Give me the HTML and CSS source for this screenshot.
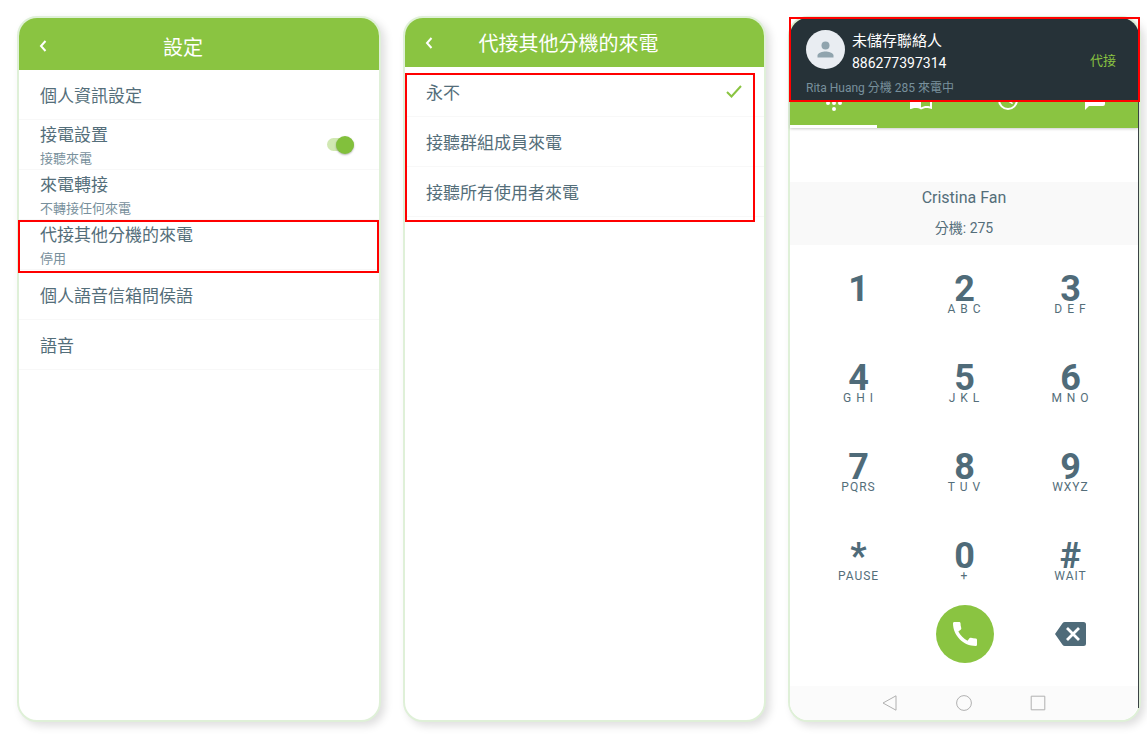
FILE: index.html
```html
<!DOCTYPE html>
<html lang="zh-Hant">
<head>
<meta charset="utf-8">
<meta name="viewport" content="width=device-width, initial-scale=1">
<title>設定</title>
<link rel="stylesheet" href="styles.css">
</head>
<body>
<main class="screens">

  <section class="phone">
    <header class="bar bar-tall">
      <button class="back" type="button" aria-label="返回"><svg width="8" height="12" viewBox="0 0 8 12"><path d="M6.500 1 2 6l4.500 5"/></svg></button>
      <h1 class="bar-title">設定</h1>
    </header>
    <ul class="list">
      <li class="row"><span class="row-title">個人資訊設定</span></li>
      <li class="row row-split">
        <label class="row-text" for="answer"><span class="row-title">接電設置</span><span class="row-sub">接聽來電</span></label>
        <input class="switch" id="answer" type="checkbox" role="switch" checked>
      </li>
      <li class="row"><span class="row-title">來電轉接</span><span class="row-sub">不轉接任何來電</span></li>
      <li class="row row-marked"><span class="row-title">代接其他分機的來電</span><span class="row-sub">停用</span></li>
      <li class="row"><span class="row-title">個人語音信箱問侯語</span></li>
      <li class="row"><span class="row-title">語音</span></li>
    </ul>
  </section>

  <section class="phone">
    <header class="bar">
      <button class="back" type="button" aria-label="返回"><svg width="8" height="12" viewBox="0 0 8 12"><path d="M6.500 1 2 6l4.500 5"/></svg></button>
      <h1 class="bar-title">代接其他分機的來電</h1>
    </header>
    <ul class="list list-marked">
      <li class="row row-split"><span class="row-title">永不</span><svg class="tick" width="16" height="13" viewBox="0 0 16 13"><path d="M1 7l4.500 4.500L15 1"/></svg></li>
      <li class="row"><span class="row-title">接聽群組成員來電</span></li>
      <li class="row"><span class="row-title">接聽所有使用者來電</span></li>
    </ul>
  </section>

  <section class="phone">
    <div class="dialer">
      <nav class="tabs">
        <button class="tab tab-active" type="button" aria-label="撥號"><svg width="24" height="24" viewBox="0 0 24 24"><path d="M12 19a2 2 0 1 0 0 4 2 2 0 0 0 0-4zM6 13a2 2 0 1 0 0 4 2 2 0 0 0 0-4zM18 13a2 2 0 1 0 0 4 2 2 0 0 0 0-4zM12 13a2 2 0 1 0 0 4 2 2 0 0 0 0-4zM6 7a2 2 0 1 0 0 4 2 2 0 0 0 0-4zM18 7a2 2 0 1 0 0 4 2 2 0 0 0 0-4z"/></svg></button>
        <button class="tab" type="button" aria-label="聯絡人"><svg width="24" height="24" viewBox="0 0 24 24"><path d="M21 5c-1.110-.35-2.330-.5-3.500-.5-1.950 0-4.050.4-5.500 1.500-1.450-1.100-3.550-1.500-5.500-1.500S2.450 4.900 1 6v14.650c0 .25.25.5.5.5.1 0 .15-.05.25-.05C3.100 20.450 5.050 20 6.500 20c1.950 0 4.050.4 5.500 1.500 1.350-.85 3.800-1.500 5.500-1.500 1.650 0 3.350.3 4.750 1.050.1.05.15.05.25.05.25 0 .5-.25.5-.5V6c-.6-.45-1.250-.75-2-1zm0 13.500c-1.100-.35-2.300-.5-3.500-.5-1.700 0-4.150.65-5.500 1.500V8c1.350-.85 3.800-1.500 5.500-1.500 1.200 0 2.400.15 3.500.5v11.500z"/></svg></button>
        <button class="tab" type="button" aria-label="通話紀錄"><svg width="24" height="24" viewBox="0 0 24 24"><path d="M12 2a10 10 0 1 0 0 20 10 10 0 0 0 0-20zm0 18a8 8 0 1 1 0-16 8 8 0 0 1 0 16zm.5-13H11v6l5.250 3.150.75-1.230-4.500-2.670z"/></svg></button>
        <button class="tab" type="button" aria-label="訊息"><svg width="24" height="24" viewBox="0 0 24 24"><path d="M20 2H4a2 2 0 0 0-2 2v18l4-4h14a2 2 0 0 0 2-2V4a2 2 0 0 0-2-2z"/></svg></button>
      </nav>

      <div class="owner">
        <p class="owner-name">Cristina Fan</p>
        <p class="owner-ext">分機: 275</p>
      </div>

      <div class="keypad">
        <button class="key" type="button"><span class="digit">1</span><span class="letters"></span></button>
        <button class="key" type="button"><span class="digit">2</span><span class="letters">A B C</span></button>
        <button class="key" type="button"><span class="digit">3</span><span class="letters">D E F</span></button>
        <button class="key" type="button"><span class="digit">4</span><span class="letters">G H I</span></button>
        <button class="key" type="button"><span class="digit">5</span><span class="letters">J K L</span></button>
        <button class="key" type="button"><span class="digit">6</span><span class="letters">M N O</span></button>
        <button class="key" type="button"><span class="digit">7</span><span class="letters">PQRS</span></button>
        <button class="key" type="button"><span class="digit">8</span><span class="letters">T U V</span></button>
        <button class="key" type="button"><span class="digit">9</span><span class="letters">WXYZ</span></button>
        <button class="key" type="button"><span class="digit">*</span><span class="letters">PAUSE</span></button>
        <button class="key" type="button"><span class="digit">0</span><span class="letters">+</span></button>
        <button class="key" type="button"><span class="digit">#</span><span class="letters">WAIT</span></button>
      </div>

      <div class="actions">
        <button class="call" type="button" aria-label="撥打"><svg width="32" height="32" viewBox="0 0 24 24"><path d="M20.010 15.380c-1.230 0-2.420-.2-3.530-.56a.977.977 0 0 0-1.010.24l-1.570 1.970c-2.830-1.350-5.480-3.900-6.890-6.830l1.950-1.660c.27-.28.35-.67.24-1.020-.37-1.110-.56-2.300-.56-3.530 0-.54-.45-.99-.99-.99H4.190C3.650 3 3 3.240 3 3.990 3 13.280 10.730 21 20.010 21c.71 0 .99-.63.99-1.180v-3.450c0-.54-.45-.99-.99-.99z"/></svg></button>
        <button class="erase" type="button" aria-label="刪除"><svg width="32" height="24" viewBox="0 0 32 24"><path fill="#4f6b79" d="M10 0h18.500a2.500 2.500 0 0 1 2.500 2.500v19a2.500 2.500 0 0 1-2.500 2.500H10a3 3 0 0 1-2.500-1.300L0 12 7.500 1.300A3 3 0 0 1 10 0z"/><path fill="none" stroke="#fff" stroke-width="2.800" d="M12 6l12 12M24 6L12 18"/></svg></button>
      </div>

      <div class="sysnav">
        <button class="sys" type="button" aria-label="上一頁"><svg width="16" height="16" viewBox="0 0 16 16"><path d="M14 .8v14.400L1 8z"/></svg></button>
        <button class="sys" type="button" aria-label="主畫面"><svg width="16" height="16" viewBox="0 0 16 16"><circle cx="8" cy="8" r="7.400"/></svg></button>
        <button class="sys" type="button" aria-label="最近使用"><svg width="16" height="16" viewBox="0 0 16 16"><path d="M1.200 1.200h13.600v13.600H1.200z"/></svg></button>
      </div>

      <div class="toast">
        <div class="caller">
          <svg class="avatar" width="39" height="39" viewBox="0 0 39 39"><circle cx="19.500" cy="19.500" r="19.500" fill="#e9edf2"/><circle cx="19.500" cy="15.500" r="4" fill="#90a4ae"/><path fill="#90a4ae" d="M11.500 27.500v-2c0-2.700 5.300-4 8-4s8 1.300 8 4v2z"/></svg>
          <div class="caller-text">
            <p class="caller-name">未儲存聯絡人</p>
            <p class="caller-number">886277397314</p>
          </div>
          <button class="pickup" type="button">代接</button>
        </div>
        <p class="via">Rita Huang 分機 285 來電中</p>
      </div>
    </div>
  </section>

</main>
</body>
</html>
```

FILE: styles.css
```css
* {
  box-sizing: border-box;
}

body {
  margin: 0;
  background: #fff;
  color: #546e7a;
  font-family: Roboto, "Noto Sans CJK TC", sans-serif;
}

h1, p, ul {
  margin: 0;
  padding: 0;
}

button {
  padding: 0;
  border: 0;
  background: none;
  color: inherit;
  font-family: inherit;
}

svg {
  display: block;
}

.screens {
  display: grid;
  grid-template-columns: 364fr 363fr 353fr;
  gap: 22px;
  min-height: 100vh;
  padding: 16px 6px 16px 17px;
}

.phone {
  display: flex;
  flex-direction: column;
  border: 2px solid #dff0d8;
  border-radius: 20px;
  background: #fff;
  box-shadow: 4px 4px 8px rgba(0, 0, 0, 0.13);
}

/* Title bars */
.bar {
  display: flex;
  align-items: center;
  min-height: 49px;
  padding-right: 80px;
  border-radius: 18px 18px 0 0;
  background: #8ac441;
  color: #fff;
}

.bar-tall {
  min-height: 52px;
  padding-top: 4px;
}

.back {
  display: flex;
  align-items: center;
  justify-content: center;
  width: 48px;
  height: 40px;
}

.back path {
  fill: none;
  stroke: #fff;
  stroke-width: 2;
}

.bar-title {
  flex: 1;
  padding-top: 3px;
  font-size: 20px;
  font-weight: 400;
  line-height: 28px;
  text-align: center;
}

/* Option lists */
.list {
  position: relative;
  list-style: none;
}

.row {
  position: relative;
  display: flex;
  flex-direction: column;
  justify-content: center;
  min-height: 50px;
  padding: 3px 22px 0 21px;
  border-bottom: 1px solid #f8f8f8;
}

.row-split {
  flex-direction: row;
  align-items: center;
  justify-content: space-between;
}

.row-text {
  display: flex;
  flex-direction: column;
}

.row-title {
  font-size: 17px;
  line-height: 25px;
}

.row-sub {
  color: #78909c;
  font-size: 13px;
  line-height: 21px;
}

.row-marked::after,
.list-marked::after,
.toast::after {
  position: absolute;
  border: 2px solid #f00;
  content: "";
  pointer-events: none;
}

.row-marked::after {
  inset: 0 0 -4px -1px;
}

.list-marked::after {
  inset: 6px 9px -5px 0;
}

.tick {
  margin-bottom: 3px;
  fill: none;
  stroke: #8ac441;
  stroke-width: 2;
}

.switch {
  display: flex;
  align-items: center;
  justify-content: flex-end;
  width: 27px;
  height: 13px;
  margin: 0 3px 3px 0;
  border-radius: 7px;
  background: #d1e8b3;
  appearance: none;
}

.switch::before {
  width: 18px;
  height: 18px;
  flex: none;
  border-radius: 50%;
  background: #82c03c;
  box-shadow: 0 1px 2px rgba(0, 0, 0, 0.3);
  content: "";
}

/* Dialer */
.dialer {
  position: relative;
  display: flex;
  flex: 1;
  flex-direction: column;
}

.dialer::before {
  position: absolute;
  inset: 84px 0 12px auto;
  width: 1px;
  background: #3a4245;
  content: "";
}

.tabs {
  display: flex;
  align-items: flex-end;
  height: 110px;
  margin-right: 1px;
  border-radius: 18px 18px 0 0;
  background: #8ac441;
  box-shadow: 0 1px 3px rgba(0, 0, 0, 0.2);
}

.tab {
  display: flex;
  flex: 1;
  justify-content: center;
  padding-bottom: 13px;
  border-bottom: 3px solid transparent;
}

.tab-active {
  border-bottom-color: #fff;
}

.tab svg {
  fill: #fff;
}

.owner {
  margin: 54px 1px 0 0;
  padding: 1px 0 2px;
  background: #f9f9f9;
  text-align: center;
}

.owner-name {
  font-size: 16px;
  line-height: 30px;
}

.owner-ext {
  font-size: 14px;
  line-height: 30px;
}

.keypad {
  display: grid;
  flex: 1;
  grid-template-columns: repeat(3, 106px);
  grid-auto-rows: 1fr;
  justify-content: center;
  padding-top: 7px;
}

.key {
  display: flex;
  flex-direction: column;
  align-items: center;
  justify-content: center;
}

.digit {
  color: #4f6b79;
  font-size: 36px;
  font-weight: 700;
  line-height: 24px;
}

.letters {
  min-height: 16px;
  font-size: 12px;
  letter-spacing: 1px;
  line-height: 16px;
}

.actions {
  display: grid;
  grid-template-columns: repeat(3, 106px);
  align-items: center;
  justify-content: center;
  justify-items: center;
  margin-top: -3px;
  padding-bottom: 23px;
}

.call {
  display: flex;
  grid-column: 2;
  align-items: center;
  justify-content: center;
  width: 58px;
  height: 58px;
  border-radius: 50%;
  background: #8ac441;
}

.call svg {
  fill: #fff;
}

.sysnav {
  display: flex;
  gap: 58px;
  align-items: center;
  justify-content: center;
  height: 34px;
  margin-right: 1px;
  border-radius: 0 0 18px 18px;
  background: #fbfbfb;
}

.sys svg {
  fill: none;
  stroke: #b0b0b0;
}

/* Incoming call banner */
.toast {
  position: absolute;
  top: 0;
  right: 0;
  left: 0;
  height: 84px;
  padding: 12px 23px 0 16px;
  border-radius: 18px 18px 0 0;
  background: #263238;
  color: #fff;
}

.toast::after {
  inset: -1px -1px 0;
}

.caller {
  display: flex;
  gap: 7px;
  align-items: flex-start;
}

.caller-text {
  flex: 1;
}

.caller-name {
  font-size: 15px;
  line-height: 22px;
}

.caller-number {
  font-size: 14px;
  line-height: 22px;
}

.pickup {
  padding-top: 20px;
  color: #8ac441;
  font-size: 13px;
  line-height: 22px;
}

.via {
  color: #78909c;
  font-size: 12px;
  line-height: 28px;
}
```
